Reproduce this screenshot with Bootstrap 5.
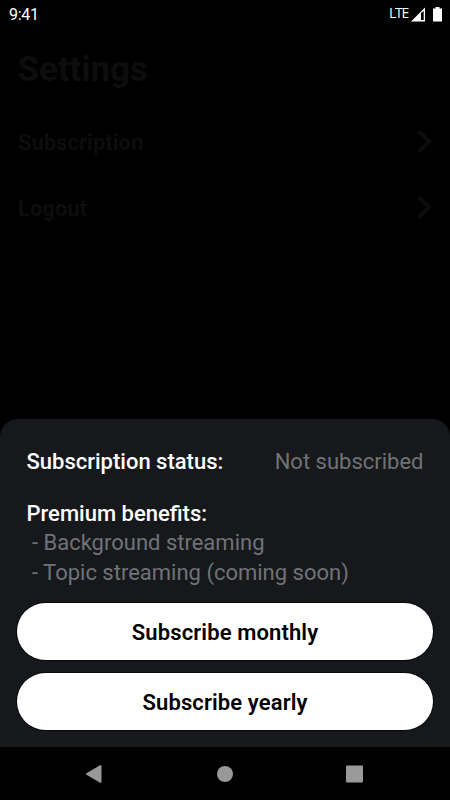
<!DOCTYPE html>
<html lang="en" data-bs-theme="dark">
<head>
<meta charset="utf-8">
<meta name="viewport" content="width=device-width, initial-scale=1">
<title>Settings</title>
<link href="https://cdn.jsdelivr.net/npm/bootstrap@5.3.0/dist/css/bootstrap.min.css" rel="stylesheet">
<style>
  body { font-family: Roboto, "Liberation Sans", sans-serif; background: #000; color: #fff; font-size: 22px; line-height: 30px; }
  svg { display: block; }
  .status-bar { height: 28px; padding: 0 8px 0 9px; font-size: 16px; line-height: 28px; }
  .clock { padding-top: 1px; letter-spacing: -.3px; }
  .network { font: 14px/28px "Open Sans", "Noto Sans", sans-serif; letter-spacing: -1.3px; margin: -2px 3px 0 0; }
  .dimmed { color: #0d0d0d; padding: 0 17px 0 18px; }
  .page-title { color: inherit; font-size: 35px; line-height: 42px; font-weight: 700; margin: 21px 0 18px -.5px; letter-spacing: -.1px; }
  .setting-row { height: 66px; font-weight: 700; }
  .setting-row span { padding-top: 2px; }
  .sheet { background: #17181c; border-radius: 18px 18px 0 0; height: 328px; padding: 28px 17px 17px; }
  .details { padding: 0 9.5px; }
  .benefits { margin-top: 22px; }
  .benefits ul { margin-top: -1px; }
  .label-text { font-weight: 500; }
  .muted-text { color: #6f7376; }
  .plans { gap: 13px; }
  .plan-btn { --bs-btn-bg: #fff; --bs-btn-color: #000; --bs-btn-hover-bg: #eee; --bs-btn-hover-color: #000; height: 57px; padding-top: 8px; font-size: 22px; font-weight: 600; letter-spacing: .12px; line-height: 30px; border: 0; box-shadow: 0 0 0 1px #08090b; }
  .nav-keys { height: 53px; }
</style>
</head>
<body>
<div class="d-flex flex-column vh-100 overflow-hidden">
  <header class="status-bar d-flex justify-content-between align-items-center">
    <span class="clock">9:41</span>
    <div class="d-flex align-items-center">
      <span class="network">LTE</span>
      <svg width="31" height="16" viewBox="0 0 31 16" fill="#fff">
        <path fill-rule="evenodd" d="M0 15.500 14 1.500V15.500ZM10 7V14H12.700V5Z"/>
        <path d="M24.500 1h4v1.500H31V15.500H22V2.500H24.500Z"/>
      </svg>
    </div>
  </header>
  <main class="dimmed flex-grow-1">
    <h1 class="page-title">Settings</h1>
    <div class="setting-row d-flex align-items-center justify-content-between">
      <span>Subscription</span>
      <svg width="16" height="24" viewBox="0 0 16 24" fill="none" stroke="currentColor" stroke-width="3.8" stroke-linecap="round"><path d="M2.800 2.300 12 11.500 2.800 20.700"/></svg>
    </div>
    <div class="setting-row d-flex align-items-center justify-content-between">
      <span>Logout</span>
      <svg width="16" height="24" viewBox="0 0 16 24" fill="none" stroke="currentColor" stroke-width="3.8" stroke-linecap="round"><path d="M2.800 2.300 12 11.500 2.800 20.700"/></svg>
    </div>
  </main>
  <section class="sheet d-flex flex-column justify-content-between">
    <div class="details">
      <div class="d-flex justify-content-between">
        <span class="label-text">Subscription status:</span>
        <span class="muted-text">Not subscribed</span>
      </div>
      <div class="benefits">
        <div class="label-text">Premium benefits:</div>
        <ul class="list-unstyled muted-text mb-0">
          <li>&nbsp;- Background streaming</li>
          <li>&nbsp;- Topic streaming (coming soon)</li>
        </ul>
      </div>
    </div>
    <div class="d-grid plans">
      <button type="button" class="btn plan-btn rounded-pill">Subscribe monthly</button>
      <button type="button" class="btn plan-btn rounded-pill">Subscribe yearly</button>
    </div>
  </section>
  <nav class="nav-keys d-flex align-items-center justify-content-center">
    <svg width="280" height="20" viewBox="0 0 280 20" fill="#999">
      <path d="M1.500 9.200 15 1.300Q16.500.800 16.500 2.200V17.800Q16.500 19.200 15 18.700L1.500 10.800Q.300 10 1.500 9.200Z"/>
      <circle cx="140" cy="10" r="8"/>
      <rect x="261" y="1.500" width="17" height="17" rx="1"/>
    </svg>
  </nav>
</div>
<script src="https://cdn.jsdelivr.net/npm/bootstrap@5.3.0/dist/js/bootstrap.bundle.min.js"></script>
</body>
</html>
